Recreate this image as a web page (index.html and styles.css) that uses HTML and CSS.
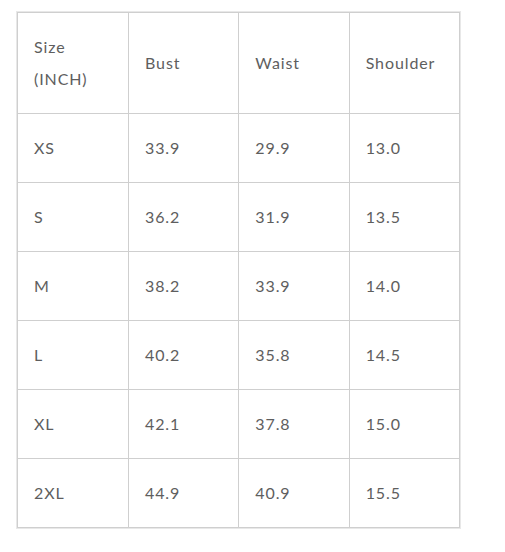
FILE: index.html
```html
<!DOCTYPE html>
<html>
<head>
<meta charset="utf-8">
<link rel="stylesheet" href="styles.css">
</head>
<body>
<table class="size-table">
  <tbody>
    <tr><td>Size<br>(INCH)</td><td>Bust</td><td>Waist</td><td>Shoulder</td></tr>
    <tr><td>XS</td><td>33.9</td><td>29.9</td><td>13.0</td></tr>
    <tr><td>S</td><td>36.2</td><td>31.9</td><td>13.5</td></tr>
    <tr><td>M</td><td>38.2</td><td>33.9</td><td>14.0</td></tr>
    <tr><td>L</td><td>40.2</td><td>35.8</td><td>14.5</td></tr>
    <tr><td>XL</td><td>42.1</td><td>37.8</td><td>15.0</td></tr>
    <tr><td>2XL</td><td>44.9</td><td>40.9</td><td>15.5</td></tr>
  </tbody>
</table>
</body>
</html>
```
FILE: styles.css
```css
body {
  margin: 11px 0 0 16px;
  background: #fff;
  font-family: Lato, "Open Sans", sans-serif;
}
.size-table {
  width: 445px;
  table-layout: fixed;
  border-collapse: separate;
  border-spacing: 0;
  border: 1px solid #e8e8e8;
}
.size-table td {
  padding: 18px 16px;
  line-height: 32px;
  font-size: 16px;
  letter-spacing: 0.9px;
  color: #5e5e5e;
  border-right: 1px solid #cfcfcf;
  border-bottom: 1px solid #cfcfcf;
  vertical-align: middle;
  text-align: left;
}
.size-table td:first-child {
  border-left: 1px solid #cfcfcf;
  width: 78px;
}
.size-table tr:first-child td {
  border-top: 1px solid #cfcfcf;
}
.size-table tr:last-child td {
  border-bottom: 1px solid #cfcfcf;
}
```
